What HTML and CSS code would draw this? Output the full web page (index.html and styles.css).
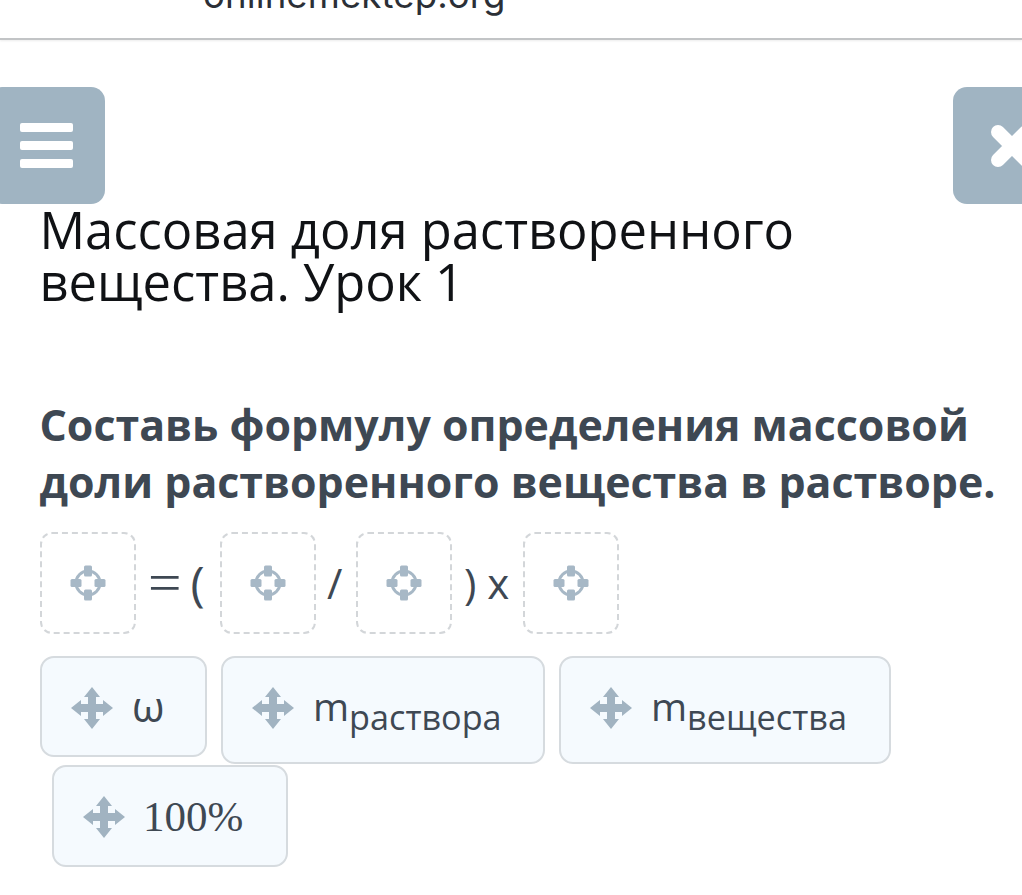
FILE: index.html
```html
<!DOCTYPE html>
<html lang="ru">
<head>
<meta charset="utf-8">
<title>Массовая доля растворенного вещества</title>
<link rel="stylesheet" href="styles.css">
</head>
<body>
<svg class="defs" width="0" height="0" aria-hidden="true">
  <symbol id="move" viewBox="0 0 42 42">
    <path d="M21 0 29 10H25V17H32V13L42 21 32 29V25H25V32H29L21 42 13 32H17V25H10V29L0 21 10 13V17H17V10H13Z" fill="#a1b3c1"/>
  </symbol>
  <symbol id="target" viewBox="0 0 36 36">
    <circle cx="18" cy="18" r="12" fill="none" stroke="#a7b8c6" stroke-width="3"/>
    <rect x="14" y="0.5" width="8" height="11" rx="1.5" fill="#a7b8c6"/>
    <rect x="14" y="24.5" width="8" height="11" rx="1.5" fill="#a7b8c6"/>
    <rect x="0.5" y="14" width="11" height="8" rx="1.5" fill="#a7b8c6"/>
    <rect x="24.5" y="14" width="11" height="8" rx="1.5" fill="#a7b8c6"/>
  </symbol>
</svg>

<header class="site-header">
  <div class="site-name">onlinemektep.org</div>
</header>

<div class="toolbar">
  <button class="tool-btn" aria-label="Меню">
    <span class="burger"><i></i><i></i><i></i></span>
  </button>
  <button class="tool-btn" aria-label="Закрыть">
    <svg class="close-icon" viewBox="0 0 42 42"><path d="M7 7 35 35M35 7 7 35" stroke="#fff" stroke-width="14" stroke-linecap="round" fill="none"/></svg>
  </button>
</div>

<main class="content">
  <h1 class="title">Массовая доля растворенного вещества. Урок 1</h1>
  <h2 class="question">Составь формулу определения массовой доли растворенного вещества в растворе.</h2>

  <div class="formula">
    <div class="slot"><svg class="target"><use href="#target"/></svg></div>
    <span class="op op-eq"><span class="eq">=</span><span class="paren">(</span></span>
    <div class="slot"><svg class="target"><use href="#target"/></svg></div>
    <span class="op op-slash">/</span>
    <div class="slot"><svg class="target"><use href="#target"/></svg></div>
    <span class="op op-close">) x</span>
    <div class="slot"><svg class="target"><use href="#target"/></svg></div>
  </div>

  <div class="tiles">
    <div class="tile tile-omega"><svg class="move"><use href="#move"/></svg><span class="tile-text">ω</span></div>
    <div class="tile tile-sub"><svg class="move"><use href="#move"/></svg><span class="tile-text">m<sub>раствора</sub></span></div>
    <div class="tile tile-sub"><svg class="move"><use href="#move"/></svg><span class="tile-text">m<sub>вещества</sub></span></div>
  </div>
  <div class="tiles tiles-second">
    <div class="tile tile-percent"><svg class="move"><use href="#move"/></svg><span class="tile-text serif">100%</span></div>
  </div>
</main>
</body>
</html>
```

FILE: styles.css
```css
html, body {
  margin: 0;
  padding: 0;
  background: #fff;
  height: 895px;
  overflow: hidden;
  font-family: "Open Sans", "Noto Sans", sans-serif;
}

.defs { position: absolute; }

.site-header {
  height: 38px;
  border-bottom: 2px solid #c2c4c6;
  box-shadow: 0 1px 2px rgba(0, 0, 0, 0.08);
  overflow: hidden;
}

.site-name {
  font-family: "Inter", "Open Sans", sans-serif;
  font-size: 36.6px;
  line-height: 40px;
  margin: -25px 0 0 203px;
  color: #2b2f36;
  letter-spacing: 0.1px;
}

.toolbar {
  display: flex;
  justify-content: space-between;
  margin: 47px -48px 0 -12px;
}

.tool-btn {
  width: 117px;
  height: 117px;
  padding: 0;
  border: 0;
  border-radius: 14px;
  background: #a0b4c2;
  display: flex;
  align-items: center;
  justify-content: center;
}

.burger {
  display: flex;
  flex-direction: column;
  gap: 9px;
  width: 53px;
}

.burger i {
  display: block;
  height: 9px;
  border-radius: 2px;
  background: #fff;
}

.close-icon {
  width: 42px;
  height: 42px;
  display: block;
}

.content {
  padding: 0 20px 0 39.5px;
}

.title {
  margin: 0;
  font-size: 50.7px;
  line-height: 52px;
  font-weight: 400;
  color: #101215;
}

.question {
  margin: 88px 0 0;
  font-size: 42.9px;
  line-height: 57px;
  font-weight: 700;
  color: #3e4853;
}

.formula {
  display: flex;
  align-items: center;
  margin: 22px 0 0;
  height: 102px;
  color: #3e4853;
  font-size: 42px;
}

.slot {
  box-sizing: border-box;
  width: 96px;
  height: 102px;
  border: 2px dashed #d3d6d9;
  border-radius: 12px;
  display: flex;
  align-items: center;
  justify-content: center;
  flex: none;
}

.target { width: 36px; height: 36px; }

.op {
  flex: none;
  line-height: 1;
  box-sizing: border-box;
  white-space: nowrap;
}

.op-eq { display: flex; align-items: center; width: 84.5px; padding-left: 12.5px; }
.eq { font-family: "Liberation Serif", serif; font-size: 54px; line-height: 42px; margin-right: 12px; transform: scaleX(1.1); transform-origin: left center; }
.paren { font-size: 48px; line-height: 42px; }
.op-slash { width: 40px; padding-left: 11px; }
.op-close { width: 71px; padding-left: 12px; }

.tiles {
  display: flex;
  align-items: flex-start;
  gap: 14px;
  margin: 22px 0 0 0.5px;
}

.tiles-second {
  margin-top: 1px;
  padding-left: 12px;
}

.tile {
  box-sizing: border-box;
  display: flex;
  align-items: flex-start;
  background: #f5fafe;
  border: 2px solid #d6dbdf;
  border-radius: 14px;
  color: #3e4853;
  font-size: 39px;
  flex: none;
}

.move {
  width: 42px;
  height: 42px;
  flex: none;
  margin: 29px 0 0 29px;
}

.tile-text { line-height: 50px; margin: 23px 0 0 19px; white-space: nowrap; }

.tile-omega { width: 167px; height: 101px; }
.tile-omega .tile-text { font-size: 42px; }
.tile-sub { height: 108px; }
.tile-sub:nth-child(2) { width: 324px; }
.tile-sub:nth-child(3) { width: 332px; }
.tile-percent { width: 236px; height: 102px; }
.tile-percent .tile-text { margin: 25px 0 0 18px; }

sub {
  font-size: 34.2px;
  line-height: 0;
  vertical-align: -9px;
}

.serif { font-family: "Liberation Serif", serif; font-size: 43px; }
```
